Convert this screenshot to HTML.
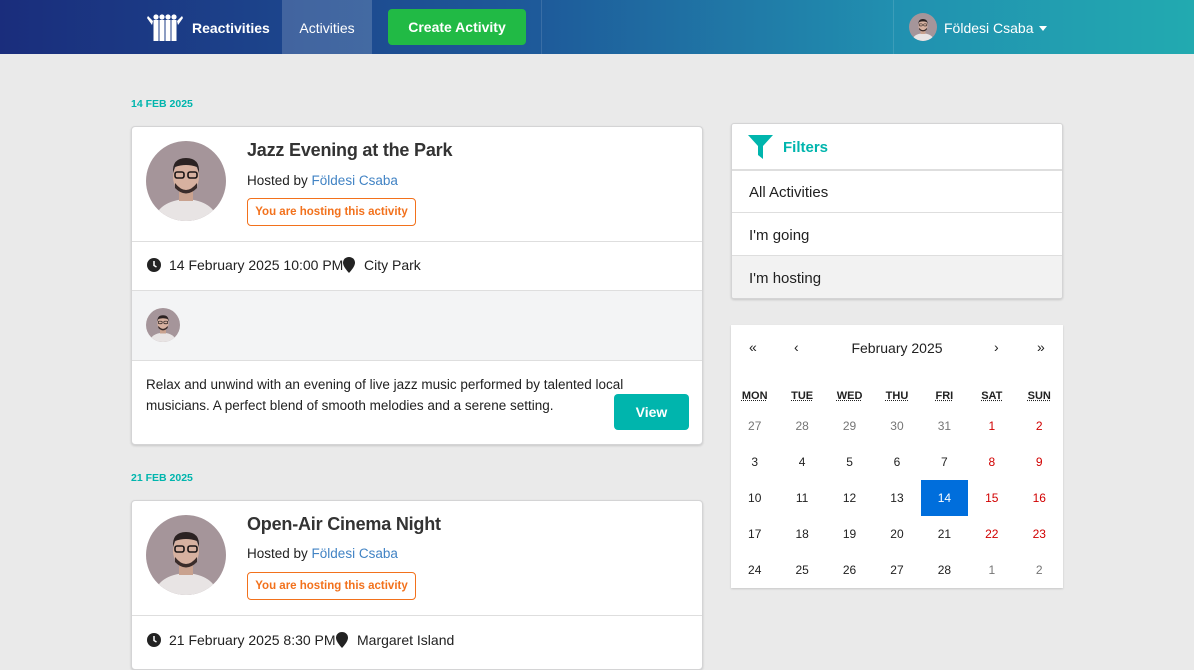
<!DOCTYPE html>
<html><head><meta charset="utf-8"><style>
*{box-sizing:border-box;margin:0;padding:0}
body{width:1194px;height:652px;overflow:hidden;background:#eaeaea;font-family:"Liberation Sans",sans-serif;color:#212121;position:relative}
.nav{position:absolute;left:0;top:0;width:1194px;height:54px;background:linear-gradient(90deg,#1a2d7c 0%,#1e5a9a 45%,#2190b0 75%,#22aab0 100%)}
.abs{position:absolute}
.navtxt{color:#fff;font-size:14px;font-weight:bold}
.card{position:absolute;left:131px;width:572px;background:#fff;border:1px solid #d4d4d5;border-radius:4px;box-shadow:0 1px 2px rgba(0,0,0,.15);overflow:hidden}
.date{position:absolute;left:131px;font-size:10.5px;font-weight:bold;color:#00b5ad}
.title{position:absolute;left:115px;font-size:18px;font-weight:bold;color:#333;letter-spacing:-0.2px}
.hosted{position:absolute;left:115px;font-size:13.5px}
.hosted span{color:#4183c4}
.badge{position:absolute;left:115px;width:169px;height:28px;border:1px solid #f2711c;border-radius:4px;color:#f2711c;font-size:11.5px;font-weight:bold;text-align:center;line-height:26px}
.sep{position:absolute;left:0;width:100%;height:1px;background:#dedede}
.cal td{width:47.5px;height:36px;text-align:center;font-size:12px;padding:0}
.cal tr.h td{height:24px;font-size:11px;font-weight:bold;text-decoration:underline dotted}
</style></head><body>
<div class="nav">
  <svg class="abs" style="left:147px;top:14px" width="36" height="27" viewBox="0 0 36 27" fill="#fff"><circle cx="9" cy="3" r="2.6"/><circle cx="15" cy="3" r="2.6"/><circle cx="21" cy="3" r="2.6"/><circle cx="27" cy="3" r="2.6"/><rect x="6.5" y="6" width="5" height="21"/><rect x="12.5" y="6" width="5" height="21"/><rect x="18.5" y="6" width="5" height="21"/><rect x="24.5" y="6" width="5" height="21"/><path d="M6 7L1 2 0 4 5 11Z M30 7l5-5 1 2-5 7Z"/></svg>
  <div class="abs navtxt" style="left:192px;top:20px">Reactivities</div>
  <div class="abs" style="left:282px;top:0;width:90px;height:54px;background:rgba(255,255,255,.17)"></div>
  <div class="abs" style="left:282px;top:20px;width:90px;text-align:center;color:#fff;font-size:14px">Activities</div>
  <div class="abs" style="left:388px;top:9px;width:138px;height:36px;background:#21ba45;border-radius:4px;color:#fff;font-size:14px;font-weight:bold;text-align:center;line-height:36px">Create Activity</div>
  <div class="abs" style="left:541px;top:0;width:1px;height:54px;background:rgba(255,255,255,.12)"></div>
  <div class="abs" style="left:893px;top:0;width:1px;height:54px;background:rgba(255,255,255,.12)"></div>
  <svg class="abs" style="left:909px;top:13px" width="28" height="28"><use href="#av"/></svg>
  <div class="abs" style="left:944px;top:20px;color:#fff;font-size:14px">Földesi Csaba</div>
  <div class="abs" style="left:1039px;top:26px;border-left:4px solid transparent;border-right:4px solid transparent;border-top:5px solid #fff"></div>
</div>
<svg width="0" height="0" style="position:absolute"><defs><symbol id="av" viewBox="0 0 80 80"><clipPath id="c"><circle cx="40" cy="40" r="40"/></clipPath><g clip-path="url(#c)"><rect width="80" height="80" fill="#a5959a"/><path d="M8 80Q12 60 40 58Q68 60 72 80Z" fill="#e8e4e4"/><rect x="33" y="46" width="14" height="14" fill="#c9a28f"/><ellipse cx="40" cy="36" rx="13" ry="16" fill="#d7b1a0"/><path d="M27 32Q26 17 40 17Q54 17 53 32L51 26Q40 22 29 26Z" fill="#2b2222"/><path d="M29 42Q40 56 51 42L51 47Q40 58 29 47Z" fill="#3a2c2a"/><rect x="29" y="31" width="9" height="6" rx="2" fill="none" stroke="#1c1616" stroke-width="1.6"/><rect x="42" y="31" width="9" height="6" rx="2" fill="none" stroke="#1c1616" stroke-width="1.6"/></g></symbol></defs></svg>

<div class="date" style="top:98px">14 FEB 2025</div>
<div class="card" style="top:126px;height:319px">
  <svg class="abs" style="left:14px;top:14px" width="80" height="80"><use href="#av"/></svg>
  <div class="title" style="top:13px">Jazz Evening at the Park</div>
  <div class="hosted" style="top:46px">Hosted by <span>Földesi Csaba</span></div>
  <div class="badge" style="top:71px">You are hosting this activity</div>
  <div class="sep" style="top:114px"></div>
  <svg class="abs" style="left:15px;top:131px" width="14" height="14" viewBox="0 0 14 14"><circle cx="7" cy="7" r="7" fill="#222"/><path d="M7 3V7.5L9.5 9" stroke="#fff" stroke-width="1.5" fill="none"/></svg>
  <div class="abs" style="left:37px;top:130px;font-size:14px">14 February 2025 10:00 PM</div>
  <svg class="abs" style="left:211px;top:130px" width="12" height="16" viewBox="0 0 12 16"><path d="M6 0C2.5 0 0 2.5 0 5.8 0 10 6 16 6 16S12 10 12 5.8C12 2.5 9.5 0 6 0Z" fill="#222"/></svg>
  <div class="abs" style="left:232px;top:130px;font-size:14px">City Park</div>
  <div class="sep" style="top:163px"></div>
  <div class="abs" style="left:0;top:164px;width:100%;height:69px;background:#f3f4f5"></div>
  <svg class="abs" style="left:14px;top:181px" width="34" height="34"><use href="#av"/></svg>
  <div class="sep" style="top:233px"></div>
  <div class="abs" style="left:14px;top:247px;width:500px;font-size:13.5px;line-height:21px">Relax and unwind with an evening of live jazz music performed by talented local musicians. A perfect blend of smooth melodies and a serene setting.</div>
  <div class="abs" style="left:482px;top:267px;width:75px;height:36px;background:#00b5ad;border-radius:4px;color:#fff;font-size:14px;font-weight:bold;text-align:center;line-height:36px">View</div>
</div>

<div class="date" style="top:472px">21 FEB 2025</div>
<div class="card" style="top:500px;height:170px">
  <svg class="abs" style="left:14px;top:14px" width="80" height="80"><use href="#av"/></svg>
  <div class="title" style="top:13px">Open-Air Cinema Night</div>
  <div class="hosted" style="top:45px">Hosted by <span>Földesi Csaba</span></div>
  <div class="badge" style="top:71px">You are hosting this activity</div>
  <div class="sep" style="top:114px"></div>
  <svg class="abs" style="left:15px;top:132px" width="14" height="14" viewBox="0 0 14 14"><circle cx="7" cy="7" r="7" fill="#222"/><path d="M7 3V7.5L9.5 9" stroke="#fff" stroke-width="1.5" fill="none"/></svg>
  <div class="abs" style="left:37px;top:131px;font-size:14px">21 February 2025 8:30 PM</div>
  <svg class="abs" style="left:204px;top:131px" width="12" height="16" viewBox="0 0 12 16"><path d="M6 0C2.5 0 0 2.5 0 5.8 0 10 6 16 6 16S12 10 12 5.8C12 2.5 9.5 0 6 0Z" fill="#222"/></svg>
  <div class="abs" style="left:225px;top:131px;font-size:14px">Margaret Island</div>
</div>

<div class="abs" style="left:731px;top:123px;width:332px;height:176px;background:#fff;border:1px solid #d4d4d5;border-radius:3px;box-shadow:0 1px 2px rgba(0,0,0,.15);overflow:hidden">
  <svg class="abs" style="left:16px;top:11px" width="25" height="24" viewBox="0 0 25 24"><path d="M0 0H25L15 11V24L10 20V11Z" fill="#00b5ad"/></svg>
  <div class="abs" style="left:51px;top:15px;font-size:15px;font-weight:bold;color:#00b5ad">Filters</div>
  <div class="sep" style="top:45px;height:2px"></div>
  <div class="abs" style="left:17px;top:60px;font-size:15px">All Activities</div>
  <div class="sep" style="top:88px"></div>
  <div class="abs" style="left:17px;top:103px;font-size:15px">I'm going</div>
  <div class="sep" style="top:131px"></div>
  <div class="abs" style="left:0;top:132px;width:100%;height:44px;background:#f2f2f2"></div>
  <div class="abs" style="left:17px;top:146px;font-size:15px">I'm hosting</div>
</div>

<div class="abs" style="left:731px;top:325px;width:332px;height:263px;background:#fff;box-shadow:0 1px 2px rgba(0,0,0,.15);overflow:hidden">
  <div class="abs" style="left:18px;top:14px;font-size:14px">«</div>
  <div class="abs" style="left:63px;top:14px;font-size:14px">‹</div>
  <div class="abs" style="left:0;top:15px;width:332px;text-align:center;font-size:14px">February 2025</div>
  <div class="abs" style="left:263px;top:14px;font-size:14px">›</div>
  <div class="abs" style="left:306px;top:14px;font-size:14px">»</div>
  <table class="cal abs" style="left:0;top:59px;border-collapse:collapse;width:332px">
    <tr class="h"><td>MON</td><td>TUE</td><td>WED</td><td>THU</td><td>FRI</td><td>SAT</td><td>SUN</td></tr>
    <tr style="color:#757575"><td>27</td><td>28</td><td>29</td><td>30</td><td>31</td><td style="color:#d10000">1</td><td style="color:#d10000">2</td></tr>
    <tr><td>3</td><td>4</td><td>5</td><td>6</td><td>7</td><td style="color:#d10000">8</td><td style="color:#d10000">9</td></tr>
    <tr><td>10</td><td>11</td><td>12</td><td>13</td><td style="background:#006edc;color:#fff">14</td><td style="color:#d10000">15</td><td style="color:#d10000">16</td></tr>
    <tr><td>17</td><td>18</td><td>19</td><td>20</td><td>21</td><td style="color:#d10000">22</td><td style="color:#d10000">23</td></tr>
    <tr><td>24</td><td>25</td><td>26</td><td>27</td><td>28</td><td style="color:#757575">1</td><td style="color:#757575">2</td></tr>
  </table>
</div>
</body></html>
